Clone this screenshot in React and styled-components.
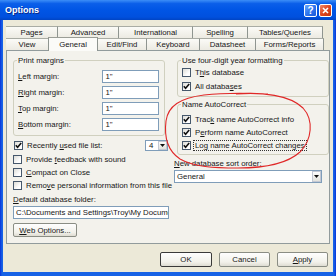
import styled, { createGlobalStyle } from "styled-components";

const GlobalStyle = createGlobalStyle`
  html, body {
    margin: 0;
    padding: 0;
    background: #fff;
  }
  body {
    font-family: "Liberation Sans", Arial, sans-serif;
  }
`;

const rowOne = [
  { label: "Pages", width: 52 },
  { label: "Advanced", width: 61 },
  { label: "International", width: 74 },
  { label: "Spelling", width: 55 },
  { label: "Tables/Queries", width: 75 },
];

const rowTwo = [
  { label: "View", width: 43 },
  { label: "General", width: 50, active: true },
  { label: "Edit/Find", width: 49 },
  { label: "Keyboard", width: 53 },
  { label: "Datasheet", width: 56 },
  { label: "Forms/Reports", width: 68 },
];

function Check({ checked }) {
  return (
    <Box>
      {checked && (
        <svg width="7" height="7" viewBox="0 0 7 7">
          <polyline points="0.8,3.2 2.6,5.2 6.2,1" fill="none" stroke="#111" strokeWidth="1.6" />
        </svg>
      )}
    </Box>
  );
}

function CheckRow({ checked, children, focus, h }) {
  return (
    <CheckLine h={h}>
      <Check checked={checked} />
      <CheckText focus={focus}>{children}</CheckText>
    </CheckLine>
  );
}

function Arrow() {
  return (
    <DropBtn>
      <svg width="5" height="3" viewBox="0 0 5 3">
        <polygon points="0,0 5,0 2.5,3" fill="#111" />
      </svg>
    </DropBtn>
  );
}

export default function App() {
  return (
    <>
      <GlobalStyle />
      <Window>
        <TitleBar>
          <Title>Options</Title>
          <CapButton>?</CapButton>
          <CapButton close>
            <svg width="7" height="7" viewBox="0 0 7 7">
              <path d="M1 1 L6 6 M6 1 L1 6" stroke="#fff" strokeWidth="1.6" />
            </svg>
          </CapButton>
        </TitleBar>

        <Body>
          <TabRow>
            {rowOne.map((t) => (
              <Tab key={t.label} w={t.width}>{t.label}</Tab>
            ))}
          </TabRow>
          <TabRow>
            {rowTwo.map((t) => (
              <Tab key={t.label} w={t.width} active={t.active}>{t.label}</Tab>
            ))}
          </TabRow>

          <Panel>
            <Column>
              <Group w={152}>
                <Legend>Print margins</Legend>
                <MarginRow>
                  <MarginLabel><u>L</u>eft margin:</MarginLabel>
                  <Field w={57}>1"</Field>
                </MarginRow>
                <MarginRow>
                  <MarginLabel><u>R</u>ight margin:</MarginLabel>
                  <Field w={57}>1"</Field>
                </MarginRow>
                <MarginRow>
                  <MarginLabel><u>T</u>op margin:</MarginLabel>
                  <Field w={57}>1"</Field>
                </MarginRow>
                <MarginRow>
                  <MarginLabel><u>B</u>ottom margin:</MarginLabel>
                  <Field w={57}>1"</Field>
                </MarginRow>
              </Group>

              <RecentRow>
                <CheckRow checked>Recently <u>u</u>sed file list:</CheckRow>
                <SmallCombo>
                  <span>4</span>
                  <Arrow />
                </SmallCombo>
              </RecentRow>
              <CheckRow>Provide <u>f</u>eedback with sound</CheckRow>
              <CheckRow><u>C</u>ompact on Close</CheckRow>
              <CheckRow>Remo<u>v</u>e personal information from this file</CheckRow>
              <Caption><u>D</u>efault database folder:</Caption>
              <Field w={156}>C:\Documents and Settings\Troy\My Documents</Field>
              <PushButton w={64} h={14} top={4}><u>W</u>eb Options...</PushButton>
            </Column>

            <Column>
              <Group inset={3} pb={3}>
                <Legend>Use four-digit year formatting</Legend>
                <CheckRow h={14}>T<u>h</u>is database</CheckRow>
                <CheckRow checked h={14}>All databa<u>s</u>es</CheckRow>
              </Group>
              <Group inset={3} pb={2} top={3}>
                <Legend>Name AutoCorrect</Legend>
                <Spacer />
                <CheckRow checked>Trac<u>k</u> name AutoCorrect info</CheckRow>
                <CheckRow checked>P<u>e</u>rform name AutoCorrect</CheckRow>
                <CheckRow checked focus>Lo<u>g</u> name AutoCorrect changes</CheckRow>
              </Group>
              <Caption top={2}><u>N</u>ew database sort order:</Caption>
              <WideCombo>
                <span>General</span>
                <Arrow />
              </WideCombo>
            </Column>
          </Panel>

          <ButtonBar>
            <PushButton w={52} h={15} primary>OK</PushButton>
            <PushButton w={51} h={15}>Cancel</PushButton>
            <PushButton w={51} h={15}><u>A</u>pply</PushButton>
          </ButtonBar>
        </Body>

        <Marker width="336" height="276" viewBox="0 0 336 276">
          <path
            d="M236 94 C262 92 290 95 303 108 C314 120 312 140 300 152 C288 163 266 168 238 168 C214 168 194 167 180 159 C168 151 164 137 166 121 C168 106 180 98 204 95 C222 93 246 93 268 94"
            fill="none"
            stroke="#e02828"
            strokeWidth="1.1"
          />
        </Marker>
      </Window>
    </>
  );
}

const Window = styled.div`
  position: relative;
  width: 336px;
  height: 276px;
  box-sizing: border-box;
  display: flex;
  flex-direction: column;
  background: linear-gradient(to right, #0831d9, #1662e6 2px, #1662e6 calc(100% - 2px), #0831d9);
  padding: 0 3px 4px 3px;
  overflow: hidden;
  font-size: 7.8px;
  color: #161616;
`;

const TitleBar = styled.div`
  height: 20px;
  margin: 0 -3px;
  padding: 0 4px 0 5px;
  display: flex;
  align-items: center;
  gap: 2px;
  background: linear-gradient(to bottom, #3c8ef7 0%, #0b5fe9 18%, #0055e5 50%, #0050de 85%, #0044c4 100%);
`;

const Title = styled.div`
  flex: 1;
  color: #fff;
  font-weight: bold;
  font-size: 9px;
  text-shadow: 1px 1px 0 #0a2a8a;
`;

const CapButton = styled.div`
  width: 13px;
  height: 13px;
  box-sizing: border-box;
  border: 1px solid #fff;
  border-radius: 2px;
  display: flex;
  align-items: center;
  justify-content: center;
  color: #fff;
  font-weight: bold;
  font-size: 10px;
  background: ${(p) =>
    p.close
      ? "linear-gradient(135deg, #f08a6a, #e0461e 50%, #c2350f)"
      : "linear-gradient(135deg, #6aa8ff, #2f76ee 50%, #1a58d8)"};
`;

const Body = styled.div`
  flex: 1;
  background: #ece9d8;
  padding: 6px 3px 5px 3px;
  display: flex;
  flex-direction: column;
`;

const TabRow = styled.div`
  display: flex;
  height: 12px;
`;

const Tab = styled.div`
  width: ${(p) => p.w}px;
  box-sizing: border-box;
  display: flex;
  align-items: center;
  justify-content: center;
  border-top: 1px solid #a9aca4;
  border-right: 1px solid #8f9590;
  background: ${(p) => (p.active ? "#fbfbf8" : "linear-gradient(#fbfbf7, #eceae2)")};
  position: relative;
  white-space: nowrap;
  ${(p) =>
    p.active &&
    `
    height: 14px;
    margin-top: -1px;
    margin-left: -1px;
    border-left: 1px solid #8f9590;
    border-top: 1px solid #9a9d96;
    z-index: 2;
    padding-bottom: 1px;
  `}
`;

const Panel = styled.div`
  height: 194px;
  box-sizing: border-box;
  border: 1px solid #919b9c;
  background: #f3f2ec;
  padding: 5px 1px 0 6px;
  display: grid;
  grid-template-columns: 157px 155px;
  column-gap: 4px;
  align-items: start;
`;

const Column = styled.div`
  display: flex;
  flex-direction: column;
`;

const Group = styled.fieldset`
  margin: ${(p) => p.top || 0}px 0 0 ${(p) => p.inset || 0}px;
  ${(p) => p.w && `width: ${p.w}px;`}
  box-sizing: border-box;
  min-inline-size: 0;
  border: 1px solid #d0d0bf;
  border-radius: 3px;
  padding: 0 5px ${(p) => (p.pb != null ? p.pb : 3)}px 4px;
  display: flex;
  flex-direction: column;
`;

const Legend = styled.legend`
  padding: 0 1px;
  margin-left: -1px;
  line-height: 9px;
`;

const Spacer = styled.div`
  height: 4px;
`;

const MarginRow = styled.div`
  display: flex;
  align-items: center;
  height: 16px;
  &:first-of-type {
    margin-top: 3px;
  }
`;

const MarginLabel = styled.div`
  width: 85px;
`;

const Field = styled.div`
  width: ${(p) => p.w}px;
  height: 13px;
  box-sizing: border-box;
  border: 1px solid #7f9db9;
  background: #fff;
  padding: 0 2px;
  display: flex;
  align-items: center;
  white-space: nowrap;
  overflow: hidden;
`;

const CheckLine = styled.div`
  display: flex;
  align-items: center;
  height: ${(p) => p.h || 13}px;
  gap: 3px;
  white-space: nowrap;
`;

const Box = styled.div`
  width: 9px;
  height: 9px;
  box-sizing: border-box;
  border: 1px solid #46586c;
  background: linear-gradient(135deg, #dcdcd6, #fff 70%);
  display: flex;
  align-items: center;
  justify-content: center;
  flex: none;
`;

const CheckText = styled.span`
  padding: 0 1px;
  outline: ${(p) => (p.focus ? "1px dotted #333" : "none")};
  line-height: 9px;
`;

const RecentRow = styled.div`
  display: flex;
  align-items: center;
  justify-content: space-between;
  height: 15px;
  margin-top: 2px;
  padding-left: 1px;
`;

const SmallCombo = styled.div`
  width: 23px;
  height: 11px;
  box-sizing: border-box;
  border: 1px solid #7f9db9;
  background: #fff;
  display: flex;
  align-items: center;
  justify-content: space-between;
  padding-left: 3px;
  margin-right: 2px;
`;

const WideCombo = styled(SmallCombo)`
  width: 148px;
  height: 13px;
  padding-left: 2px;
  margin: 0;
`;

const DropBtn = styled.div`
  width: 9px;
  height: 100%;
  box-sizing: border-box;
  border: 1px solid #c3c8d4;
  background: linear-gradient(#fdfdfd, #e2e2dc);
  display: flex;
  align-items: center;
  justify-content: center;
`;

const Caption = styled.div`
  height: 13px;
  display: flex;
  align-items: center;
  margin-top: ${(p) => p.top || 1}px;
  white-space: nowrap;
`;

const PushButton = styled.div`
  width: ${(p) => p.w}px;
  height: ${(p) => p.h}px;
  margin-top: ${(p) => p.top || 0}px;
  box-sizing: border-box;
  border: ${(p) => (p.primary ? "1.5px solid #3a3a3a" : "1px solid #8a8d84")};
  border-radius: 2px;
  background: linear-gradient(#fefefe, #f2f1ea 70%, #dedcd2);
  display: flex;
  align-items: center;
  justify-content: center;
  white-space: nowrap;
  flex: none;
`;

const ButtonBar = styled.div`
  display: flex;
  justify-content: flex-end;
  gap: 7px;
  margin-top: 8px;
  padding-right: 2px;
`;

const Marker = styled.svg`
  position: absolute;
  left: 0;
  top: 0;
  pointer-events: none;
`;
